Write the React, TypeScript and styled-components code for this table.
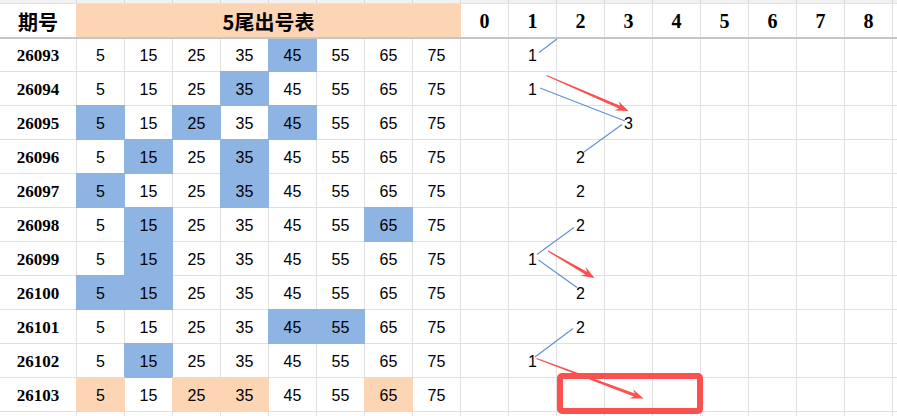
import styled, { createGlobalStyle } from "styled-components";

const GRID_LINE = "#e0e0e0";
const BLUE_FILL = "#8db4e2";
const PEACH_FILL = "#fcd5b4";
const COLUMNS = "76px repeat(18, 47px)";

const GlobalStyle = createGlobalStyle`
  html, body {
    margin: 0;
    padding: 0;
    background: #fff;
    overflow: hidden;
  }
`;

const Sheet = styled.div`
  position: relative;
  width: 897px;
  height: 416px;
  overflow: hidden;
  background: #fff;
  font-family: "Liberation Sans", Arial, sans-serif;
  color: #000;
`;

const TopStrip = styled.div`
  display: grid;
  grid-template-columns: ${COLUMNS};
  column-gap: 1px;
  height: 3px;
  background: #d8d8d8;
  border-bottom: 1px solid ${GRID_LINE};
  div {
    background: #f2f2f2;
  }
`;

const HeaderRow = styled.div`
  display: grid;
  grid-template-columns: ${COLUMNS};
  column-gap: 1px;
  height: 33px;
  background: ${GRID_LINE};
  border-bottom: 2px solid #c6c6c6;
  overflow: hidden;
`;

const HeadCell = styled.div<{ $span?: number; $fill?: string; $cjk?: boolean }>`
  display: flex;
  align-items: center;
  justify-content: center;
  grid-column: span ${(p) => p.$span ?? 1};
  background: ${(p) => p.$fill ?? "#fff"};
  box-shadow: ${(p) => (p.$fill ? `0 0 0 1px ${p.$fill}` : "none")};
  font-family: ${(p) =>
    p.$cjk
      ? `"Noto Sans CJK SC", "Liberation Serif", serif`
      : `"Liberation Serif", "Times New Roman", serif`};
  font-weight: 700;
  font-size: 20px;
  padding-top: 2px;
`;

const Body = styled.div`
  display: grid;
  grid-template-columns: ${COLUMNS};
  grid-template-rows: 32px repeat(10, 33px) 5px;
  gap: 1px;
  background: ${GRID_LINE};
  overflow: hidden;
`;

const PeriodCell = styled.div`
  display: flex;
  align-items: center;
  justify-content: center;
  background: #fff;
  font-family: "Liberation Serif", "Times New Roman", serif;
  font-weight: 700;
  font-size: 17px;
  padding-top: 2px;
`;

const NumCell = styled.div<{ $fill?: string }>`
  display: flex;
  align-items: center;
  justify-content: center;
  background: ${(p) => p.$fill ?? "#fff"};
  box-shadow: ${(p) => (p.$fill ? `0 0 0 1px ${p.$fill}` : "none")};
  font-size: 16px;
  padding-top: 2px;
`;

const Blank = styled.div`
  background: #fff;
`;

const Overlay = styled.svg`
  position: absolute;
  left: 0;
  top: 0;
  pointer-events: none;
`;

type Row = { id: string; hits: number[]; peach?: boolean; trend?: [number, string] };

const rows: Row[] = [
  { id: "26093", hits: [4], trend: [1, "1"] },
  { id: "26094", hits: [3], trend: [1, "1"] },
  { id: "26095", hits: [0, 2, 4], trend: [3, "3"] },
  { id: "26096", hits: [1, 3], trend: [2, "2"] },
  { id: "26097", hits: [0, 3], trend: [2, "2"] },
  { id: "26098", hits: [1, 6], trend: [2, "2"] },
  { id: "26099", hits: [1], trend: [1, "1"] },
  { id: "26100", hits: [0, 1], trend: [2, "2"] },
  { id: "26101", hits: [4, 5], trend: [2, "2"] },
  { id: "26102", hits: [1], trend: [1, "1"] },
  { id: "26103", hits: [0, 2, 3, 6], peach: true },
];

const tails = [5, 15, 25, 35, 45, 55, 65, 75];
const trendCols = [0, 1, 2, 3, 4, 5, 6, 7, 8];

const blueLines = [
  [539, 52.5, 557, 39],
  [540, 88, 625, 121],
  [622, 124.5, 584, 152],
  [537, 254.5, 574, 227.5],
  [538.5, 260, 577, 287.5],
  [535, 357, 573, 328.5],
];

const redArrows = [
  [546.5, 75.5, 628.5, 111],
  [548, 251, 594.5, 278],
  [536.5, 358.5, 643.5, 398.5],
];

// tapered shaft with a swept head, like a screenshot-tool arrow
function arrowPoints(x1: number, y1: number, x2: number, y2: number) {
  const len = Math.hypot(x2 - x1, y2 - y1);
  const ux = (x2 - x1) / len;
  const uy = (y2 - y1) / len;
  const nx = -uy;
  const ny = ux;
  const head = 13;
  const bx = x2 - ux * head * 0.75;
  const by = y2 - uy * head * 0.75;
  const wx = x2 - ux * head;
  const wy = y2 - uy * head;
  const pts = [
    [x1 + nx * 0.6, y1 + ny * 0.6],
    [bx + nx * 1.6, by + ny * 1.6],
    [wx + nx * 5, wy + ny * 5],
    [x2, y2],
    [wx - nx * 5, wy - ny * 5],
    [bx - nx * 1.6, by - ny * 1.6],
    [x1 - nx * 0.6, y1 - ny * 0.6],
  ];
  return pts.map((p) => p.map((v) => v.toFixed(1)).join(",")).join(" ");
}

export default function App() {
  return (
    <>
      <GlobalStyle />
      <Sheet>
        <TopStrip>
          {Array.from({ length: 19 }, (_, i) => (
            <div key={i} />
          ))}
        </TopStrip>
        <HeaderRow>
          <HeadCell $cjk>期号</HeadCell>
          <HeadCell $cjk $span={8} $fill={PEACH_FILL}>
            5尾出号表
          </HeadCell>
          {trendCols.map((c) => (
            <HeadCell key={c}>{c}</HeadCell>
          ))}
          <HeadCell />
        </HeaderRow>
        <Body>
          {rows.map((r) => [
            <PeriodCell key={r.id}>{r.id}</PeriodCell>,
            ...tails.map((t, i) => (
              <NumCell
                key={r.id + "-" + t}
                $fill={r.hits.includes(i) ? (r.peach ? PEACH_FILL : BLUE_FILL) : undefined}
              >
                {t}
              </NumCell>
            )),
            ...trendCols.map((c) => (
              <NumCell key={r.id + "-t" + c}>
                {r.trend && r.trend[0] === c ? r.trend[1] : ""}
              </NumCell>
            )),
            <Blank key={r.id + "-x"} />,
          ])}
          {Array.from({ length: 19 }, (_, i) => (
            <Blank key={"tail" + i} />
          ))}
        </Body>
        <Overlay width={897} height={416} viewBox="0 0 897 416">
          {blueLines.map(([a, b, c, d], i) => (
            <line key={i} x1={a} y1={b} x2={c} y2={d} stroke="#5f8fd3" strokeWidth={1.1} />
          ))}
          {redArrows.map(([a, b, c, d], i) => (
            <polygon key={i} points={arrowPoints(a, b, c, d)} fill="#fa5050" />
          ))}
          <rect
            x={560}
            y={376}
            width={140}
            height={35}
            rx={2}
            fill="none"
            stroke="#fa5050"
            strokeWidth={6}
          />
        </Overlay>
      </Sheet>
    </>
  );
}
